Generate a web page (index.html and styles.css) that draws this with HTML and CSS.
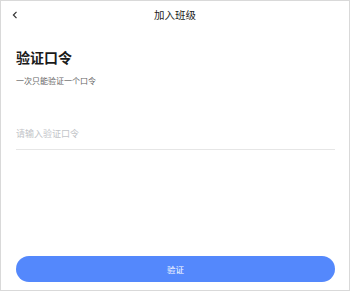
FILE: index.html
```html
<!DOCTYPE html>
<html lang="zh-CN">
<head>
    <meta charset="UTF-8">
    <meta name="viewport" content="width=device-width, initial-scale=1.0">
    <title>加入班级</title>
    <link rel="stylesheet" href="styles.css">
</head>
<body>
    <div class="page">
        <div class="topbar">
            <button class="back_btn" aria-label="返回">
                <svg width="6" height="8" viewBox="0 0 6 8">
                    <path d="M4.5 0.8 L1.4 4 L4.5 7.2" fill="none" stroke="#333" stroke-width="1.2"/>
                </svg>
            </button>
            <div class="title">加入班级</div>
            <div></div>
        </div>
        <div class="content">
            <h1 class="heading">验证口令</h1>
            <p class="sub">一次只能验证一个口令</p>
            <input type="text" class="code_input" placeholder="请输入验证口令">
            <button class="submit_btn">验证</button>
        </div>
    </div>
</body>
</html>
```

FILE: styles.css
```css
* {
    box-sizing: border-box;
}

body {
    margin: 0;
    background: #fff;
    font-family: "Noto Sans CJK SC", "Noto Sans", sans-serif;
}

.page {
    width: 350px;
    height: 291px;
    border: 1px solid #d9d9d9;
    display: flex;
    flex-direction: column;
}

.topbar {
    height: 27px;
    display: grid;
    grid-template-columns: 1fr auto 1fr;
    align-items: center;
}

.back_btn {
    justify-self: start;
    margin-left: 9px;
    padding: 0 2px;
    border: none;
    background: none;
    display: flex;
    align-items: center;
}

.title {
    font-size: 10.5px;
    color: #222;
}

.content {
    flex: 1;
    display: flex;
    flex-direction: column;
    padding: 0 14px 8px 15px;
}

.heading {
    margin: 18px 0 0;
    font-size: 14px;
    line-height: 22px;
    font-weight: 700;
    color: #1a1a1a;
}

.sub {
    margin: 7px 0 0;
    font-size: 8px;
    line-height: 12px;
    color: #666;
}

.code_input {
    display: block;
    width: 100%;
    height: 33px;
    margin-top: 30px;
    padding: 0;
    border: none;
    border-bottom: 1px solid #e6e6e6;
    font-family: inherit;
    font-size: 9px;
    color: #333;
    outline: none;
}

.code_input::placeholder {
    color: #c2c4c8;
}

.submit_btn {
    margin-top: auto;
    height: 26px;
    border: none;
    border-radius: 13px;
    background: #5488fc;
    color: #fff;
    font-family: inherit;
    font-size: 8.5px;
}
```
